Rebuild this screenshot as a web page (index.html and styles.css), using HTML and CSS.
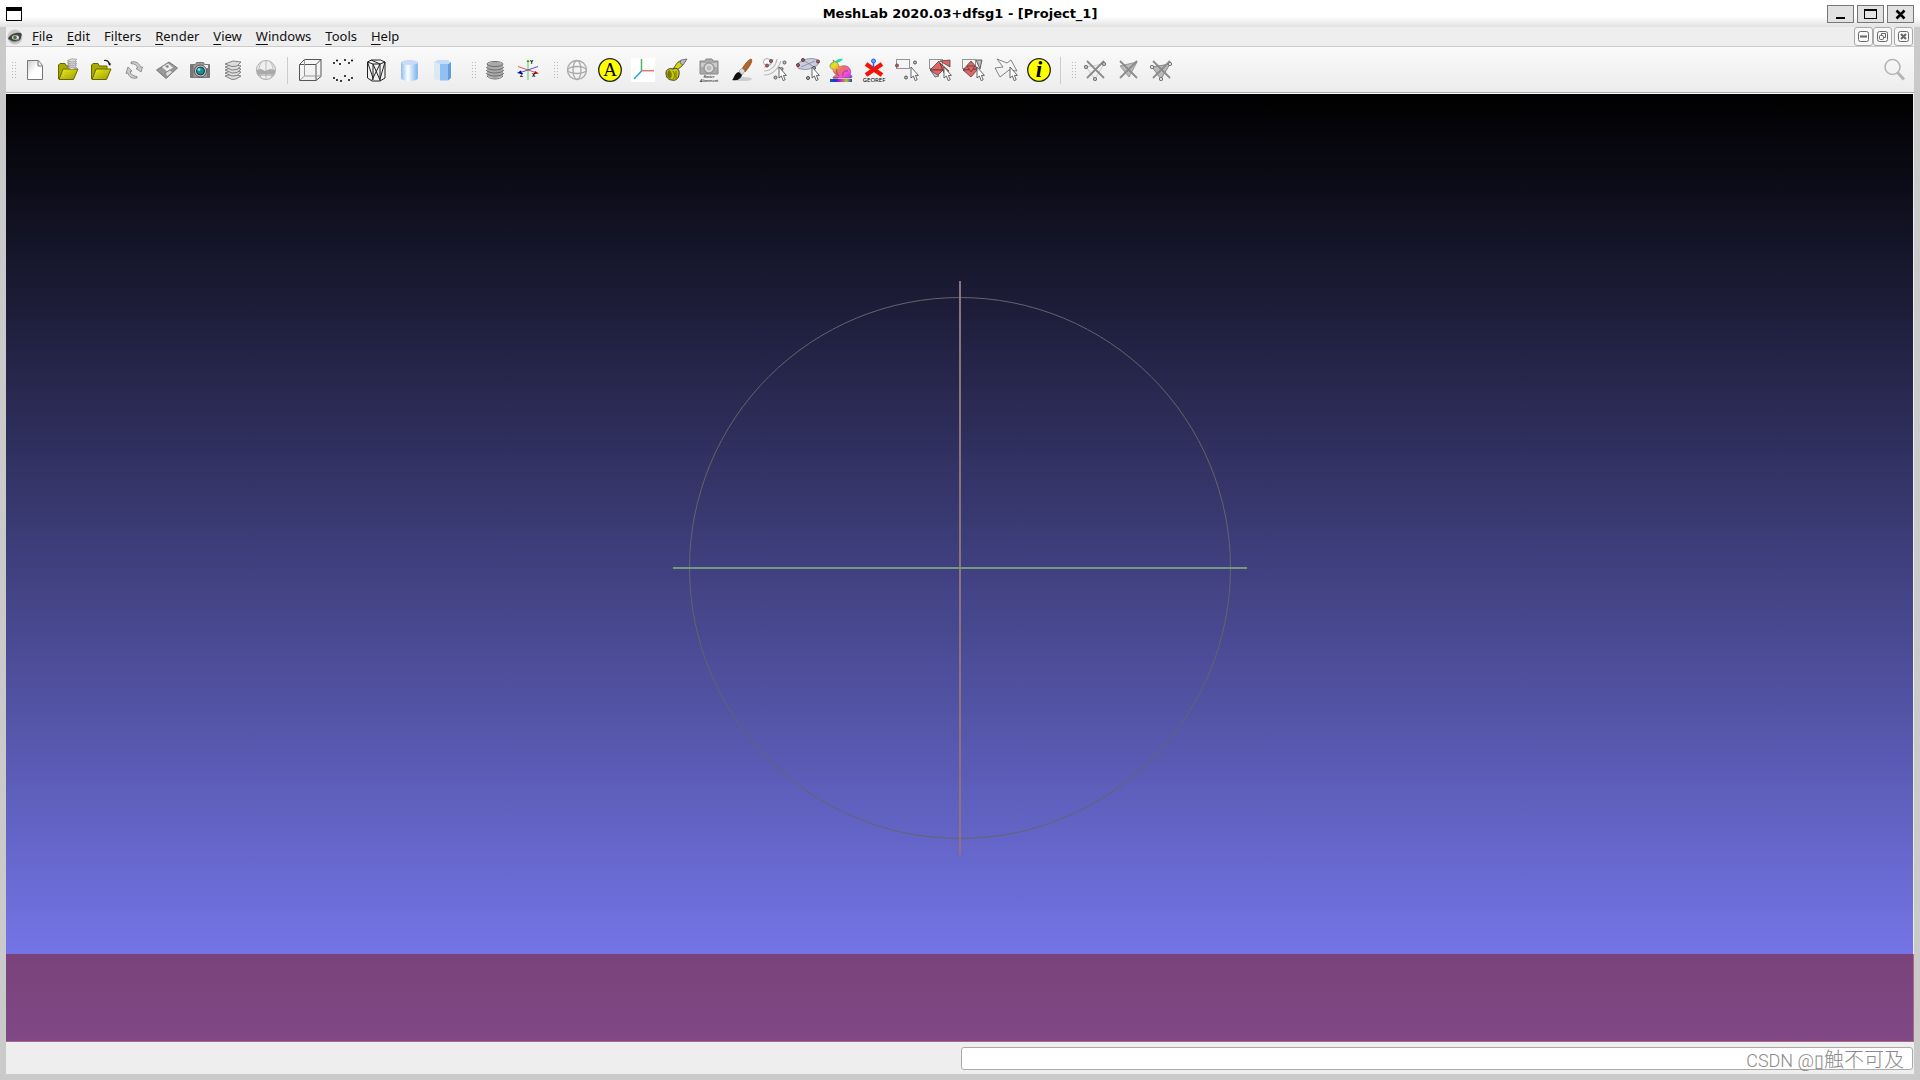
FILE: index.html
```
<!DOCTYPE html>
<html lang="en">
<head>
    <meta charset="UTF-8">
    <meta name="viewport" content="width=device-width, initial-scale=1.0">
    <title>MeshLab 2020.03+dfsg1 - [Project_1]</title>
    <link rel="stylesheet" href="styles.css">
</head>
<body>
    <!-- Shapes shared by several toolbar icons -->
    <svg class="defs" aria-hidden="true">
        <defs>
            <linearGradient id="paper" x1="0" y1="0" x2="1" y2="1">
                <stop offset="0" stop-color="#ccc"/><stop offset=".5" stop-color="#fff"/>
            </linearGradient>
            <linearGradient id="folder" x1="0" y1="0" x2="1" y2="1">
                <stop offset="0" stop-color="#f0f020"/><stop offset="1" stop-color="#999900"/>
            </linearGradient>
            <linearGradient id="smooth" x1="0" x2="1">
                <stop offset="0" stop-color="#8dbcf0"/><stop offset=".4" stop-color="#fff"/><stop offset=".9" stop-color="#8dbcf0"/>
            </linearGradient>
            <linearGradient id="rainbow" x1="0" x2="1">
                <stop offset="0" stop-color="#1060a0"/><stop offset=".25" stop-color="#2030e0"/><stop offset=".5" stop-color="#e020c0"/><stop offset=".75" stop-color="#a0d020"/><stop offset="1" stop-color="#2040c0"/>
            </linearGradient>
            <linearGradient id="bunny" x1="0" y1="0" x2="1" y2="1">
                <stop offset="0" stop-color="#60e040"/><stop offset=".25" stop-color="#f0e020"/><stop offset=".5" stop-color="#f07060"/><stop offset=".75" stop-color="#f050e0"/><stop offset="1" stop-color="#a030f0"/>
            </linearGradient>
            <symbol id="cursor" viewBox="0 0 24 24">
                <path d="M16 9v11l2.4-2 1.8 4.6 2-.9-1.8-4.3h3z" fill="#fff" stroke="#555" stroke-width=".9"/>
            </symbol>
            <symbol id="layers" viewBox="0 0 24 24">
                <g fill="#ddd" stroke="#777" stroke-width=".9">
                    <path d="M4 18l8-2 8 2-5 3-4 .5z"/><path d="M4 15l8-3 8 2-4 3.500-5 .5z"/><path d="M4 12l8-3 8 2-4 3.500-5 .5z"/><path d="M4 9l8-3 8 2-4 3.500-5 .5z"/><path d="M4 6l8-3 8 1-4 4-5 .5z"/>
                </g>
            </symbol>
            <symbol id="strike" viewBox="0 0 24 24">
                <path d="M4 3l17 17M21 3L4 20" stroke="#8b8b8b" stroke-width="1.800" fill="none"/>
            </symbol>
        </defs>
    </svg>

    <div class="window">
        <header class="titlebar">
            <svg class="window-icon" viewBox="0 0 16 14" shape-rendering="crispEdges"><path d="M0 0h16v14H0z"/><path d="M1 4h14v9H1z" fill="#fff"/></svg>
            <h1>MeshLab 2020.03+dfsg1 - [Project_1]</h1>
            <div class="window-buttons">
                <button aria-label="Minimize"><svg viewBox="0 0 25 16"><path d="M8 11h9v2H8z"/></svg></button>
                <button aria-label="Maximize"><svg viewBox="0 0 25 16" shape-rendering="crispEdges"><path d="M6 3h13v10H6zM7 5v7h11V5z" fill-rule="evenodd"/></svg></button>
                <button aria-label="Close"><svg viewBox="0 0 25 16"><path d="M8.500 4.500l8 8m0-8l-8 8" stroke="#000" stroke-width="2.500"/></svg></button>
            </div>
        </header>

        <div class="frame">
            <nav class="menubar">
                <svg class="app-icon" viewBox="0 0 16 16"><circle cx="8" cy="8" r="7.500" fill="#c8c8c8"/><path d="M1 10c1-4 7-7 13-6l1 2c-1 1-1 2-1 3-1 4-6 4-9 3z" fill="#444"/><ellipse cx="8.500" cy="8.500" rx="3.500" ry="2.200" fill="#ddd"/><circle cx="8" cy="8.500" r="1.800" fill="#357a35"/><path d="M3 11c3 3 7 2 9-1" fill="none" stroke="#888"/></svg>
                <button><u>F</u>ile</button>
                <button><u>E</u>dit</button>
                <button>Fi<u>l</u>ters</button>
                <button><u>R</u>ender</button>
                <button><u>V</u>iew</button>
                <button><u>W</u>indows</button>
                <button><u>T</u>ools</button>
                <button><u>H</u>elp</button>
                <div class="document-buttons">
                    <button aria-label="Minimize project"><svg viewBox="0 0 17 17"><rect x="3.500" y="3.500" width="10" height="10" rx="2"/><path d="M5 8.500h7" stroke-width="2"/></svg></button>
                    <button aria-label="Restore project"><svg viewBox="0 0 17 17"><rect x="3.500" y="3.500" width="10" height="10" rx="2"/><rect x="5.500" y="7.500" width="4" height="4" rx="1"/><path d="M7.500 7V5.500h4v4H10"/></svg></button>
                    <button class="document-close" aria-label="Close project"><svg viewBox="0 0 17 17"><rect x="3.500" y="3.500" width="10" height="10" rx="2"/><path d="M6 6l5 5m0-5l-5 5" stroke-width="2"/></svg></button>
                </div>
            </nav>

            <div class="toolbars">
                <div class="toolbar main-toolbar">
                    <span class="grip"></span>
                    <button aria-label="New project"><svg viewBox="0 0 24 24"><path d="M4.500 2.500h11l4 5v14h-15z" fill="url(#paper)" stroke="#777"/><path d="M15 3v5h4" fill="#eee" stroke="#777"/></svg></button>
                    <button aria-label="Open project"><svg viewBox="0 0 24 24"><path d="M2.500 21V7l1.500-1.500h5L10.500 8H18v5" fill="#a9a900" stroke="#666600"/><path d="M3 21.500L7 11h15l-4.500 10.500z" fill="url(#folder)" stroke="#666600"/><use href="#layers" x="8" y="-1" width="16" height="14"/></svg></button>
                    <button aria-label="Import mesh"><svg viewBox="0 0 24 24"><path d="M2.500 21V7l1.500-1.500h5L10.500 8H18v4" fill="#a9a900" stroke="#666600"/><path d="M3 21.500L7 11h15l-4.500 10.500z" fill="url(#folder)" stroke="#666600"/><path d="M15 2.500c3-.5 5 1 5.500 4" fill="none" stroke="#222" stroke-width="1.200"/><path d="M19 5.500l3 0-1 2.500z"/></svg></button>
                    <button aria-label="Reload"><svg viewBox="0 0 24 24"><g fill="#ccc" stroke="#888" stroke-width=".9"><path d="M9 4c5-1 8 1 9.500 5l2 0-1.500 5-5-3.500 2-.5c-1.500-3-3-4-7-4.500z"/><path d="M15 20c-5 1-8-1-9-5l-2 .5L6 9l4 4-2 .6c1 3 3 4.500 7 5z"/></g></svg></button>
                    <button aria-label="Export mesh"><svg viewBox="0 0 24 24"><path d="M1.500 12L14 4l8.500 6L11 20.500z" fill="#999" stroke="#777"/><path d="M7 9l6-3.500 5 4-6 4z" fill="#eee"/><path d="M10 15l5-3 3 2-6 5z" fill="#ddd" stroke="#777" stroke-width=".8"/><path d="M10 8l3-1 1 2-2 1z" fill="#888"/></svg></button>
                    <button aria-label="Snapshot"><svg viewBox="0 0 24 24"><path d="M2.500 6.500h5l1-2h7l1 2h5v13h-19z" fill="#999" stroke="#777"/><path d="M2.500 7h3v12h-3zM19 7h2v12h-2z" fill="#777"/><rect x="16" y="7" width="4" height="3" fill="#eee"/><circle cx="12.500" cy="13" r="6" fill="#ccc" stroke="#555"/><circle cx="12.500" cy="13" r="4" fill="#158e96" stroke="#234"/><circle cx="11" cy="11.500" r="1.500" fill="#80e0e0"/></svg></button>
                    <button aria-label="Show layer dialog"><svg viewBox="0 0 24 24"><use href="#layers" width="24" height="24"/></svg></button>
                    <button aria-label="Show raster mode"><svg viewBox="0 0 24 24"><circle cx="12" cy="12" r="9.500" fill="#eee" stroke="#aaa"/><path d="M12 2v20M8 3c-4 6-4 12 0 18M16 3c4 6 4 12 0 18" fill="none" stroke="#bbb"/><path d="M3 12l4-1 4 2 5-2 5 1v4l-18 0z" fill="#aaa"/><path d="M4 17h16" stroke="#999"/></svg></button>
                    <span class="separator"></span>
                    <button aria-label="Bounding box"><svg viewBox="0 0 24 24"><path d="M1.500 6.500H18v16H1.500zM1.500 6.500l5-5h16.500v17l-5 4M18 6.500l5-5" fill="none" stroke="#555"/><path d="M6.500 1.500v16.500H23M6.500 18l-5 4.500" fill="none" stroke="#999"/></svg></button>
                    <button aria-label="Points"><svg viewBox="0 0 24 24"><path d="M3 5h0M6 2.500h0M9 6h0M14 2h0M18 5h0M21 2.500h0M3 20h0M6 22h0M10 23h0M14 18h0M18 22h0M21 20h0" stroke="#000" stroke-width="2" stroke-linecap="round"/></svg></button>
                    <button aria-label="Wireframe"><svg viewBox="0 0 24 24"><path d="M3.500 4l4-2h9l4.500 2v16l-5 3H8l-4.500-3zM3.500 4L9 6h7l5-2M9 6v16M16 6v17M9 6l7 16M16 6L8 22M3.500 4L9 20M21 4l-5 17M7 2l9 4" fill="none" stroke="#222"/></svg></button>
                    <button aria-label="Smooth shading"><svg viewBox="0 0 24 24"><path d="M4 4v16c0 4 17 4 17 0V4z" fill="url(#smooth)"/><ellipse cx="12.500" cy="4.500" rx="8.500" ry="2.500" fill="#c4dcf5"/></svg></button>
                    <button aria-label="Flat shading"><svg viewBox="0 0 24 24"><path d="M4 4l6 2v16.500L4 21z" fill="#dce8f4"/><path d="M10 6h8v16.500h-8z" fill="#91c1f3"/><path d="M18 6l3-2v16l-3 2.500z" fill="#659cda"/><path d="M4 4l4-2h9l4 2-3 2h-8z" fill="#c4dcf5"/></svg></button>
                </div>

                <div class="toolbar">
                    <span class="grip"></span>
                    <button aria-label="Rasters"><svg viewBox="0 0 24 24"><path d="M4 6l8-3 8 3v12l-8 3-8-3z" fill="#aaa"/><g fill="none" stroke="#666" stroke-width=".9"><ellipse cx="12" cy="6" rx="8" ry="2.500"/><path d="M3 9c3 4 15 4 18 0M3 12c3 4 15 4 18 0M3 15c3 4 15 4 18 0M4 18c3 4 13 4 16 0"/></g></svg></button>
                    <button aria-label="Axis"><svg viewBox="0 0 24 24"><path d="M12 4v18" stroke="#9adf9a" stroke-width="1.800"/><path d="M2 8.500l19 6.500" stroke="#d55"/><path d="M22 8.500L3 15" stroke="#55c"/><path d="M10.500 4l1.500-2.500 1.500 2.500z" fill="#0a0"/><path d="M19 13l4 2.500-5 .5z" fill="#c00"/><path d="M5 12.500L1 15l5 1z" fill="#00c"/><text x="14" y="6" class="axis-label">Y</text><text x="4" y="19" class="axis-label">Z</text><text x="16" y="19" class="axis-label">X</text></svg></button>
                </div>

                <div class="toolbar edit-toolbar">
                    <span class="grip"></span>
                    <button aria-label="Trackball"><svg viewBox="0 0 24 24"><g fill="none" stroke="#aaa" stroke-width="1.300"><circle cx="12" cy="12" r="9.500"/><ellipse cx="12" cy="12" rx="4" ry="9.500"/><ellipse cx="12" cy="12" rx="9.500" ry="3.500"/></g></svg></button>
                    <button aria-label="Annotate"><svg viewBox="0 0 24 24"><circle cx="12" cy="12" r="11.300" fill="#ff0" stroke="#222" stroke-width="1.300"/><text x="12" y="18" class="letter-a">A</text></svg></button>
                    <button aria-label="Manipulators"><svg viewBox="0 0 24 24"><path d="M0 0h24v24H0z" fill="#fff"/><path d="M10.500 1v12" stroke="#4db35f" stroke-width="1.500"/><path d="M10.500 12.700H23" stroke="#ef7070" stroke-width="1.500"/><path d="M10.500 13L3 21" stroke="#20a0e0" stroke-width="1.500"/></svg></button>
                    <button aria-label="Measuring tool"><svg viewBox="0 0 24 24"><path d="M9 11c3-4 4-7 7-8l6-1-4 6-5 4z" fill="#d6d600" stroke="#444" stroke-width=".9"/><path d="M17 2l6-1-4 6-3-2z" fill="#bbb" stroke="#666" stroke-width=".8"/><path d="M2 15c0-4 4-5 7-4 4-2 7 1 6 5 0 5-4 7-7 6-4 0-6-3-6-7z" fill="#c8c800" stroke="#333"/><path d="M5 12c-3 3-2 7 1 9 3-3 2-7-1-9z" fill="#777700"/><path d="M9 13c2 3 2 6 0 8M12 13v8" fill="none" stroke="#666600" stroke-width=".9"/></svg></button>
                    <button aria-label="Raster alignment"><svg viewBox="0 0 24 24"><path d="M3 3h5l1-2h6l1 2h5v13H3z" fill="#aaa" stroke="#888"/><path d="M4 5h16v4H4z" fill="#ccc"/><circle cx="12" cy="10" r="5" fill="#ddd" stroke="#999" stroke-width="1.500"/><circle cx="12" cy="10" r="2.500" fill="#bbb"/><text x="12" y="19.500" class="tiny">Raster</text><text x="12" y="24" class="tiny">Alignment</text></svg></button>
                    <button aria-label="Z-painting"><svg viewBox="0 0 24 24"><ellipse cx="13" cy="21" rx="9" ry="2" fill="#ccc"/><path d="M12 11c3-5 6-9 9-10 2 1 0 6-6 13z" fill="#b76322" stroke="#70401c" stroke-width=".7"/><path d="M9 13l3-3 3 3-3 4z" fill="#ddd" stroke="#888" stroke-width=".6"/><path d="M2 22c2-1 2-7 7-8l3 3c-1 4-5 6-10 5z" fill="#111"/></svg></button>
                    <button aria-label="Point picking"><svg viewBox="0 0 24 24"><g fill="none" stroke="#bbb" stroke-width="1.200"><path d="M1 9c5 0 8-3 9-8M1 13c7 0 12-5 13-12M1 17c9 0 15-7 17-14"/></g><circle cx="4" cy="4" r="3.500" fill="#fff" stroke="#aaa"/><g stroke="#555"><circle cx="4" cy="7.500" r="1.500" fill="#e44"/><circle cx="8" cy="3" r="1.500" fill="#e44"/><circle cx="21.500" cy="4.500" r="1.500" fill="#bbb"/><circle cx="18.500" cy="11" r="1.500" fill="#bbb"/><circle cx="12.500" cy="19.500" r="1.500" fill="#bbb"/></g><use href="#cursor" width="24" height="24"/></svg></button>
                    <button aria-label="Select vertex clusters"><svg viewBox="0 0 24 24"><ellipse cx="12" cy="6" rx="11" ry="5" transform="rotate(-12 12 6)" fill="#c9cbe0" stroke="#99a"/><path d="M5 9L19 3M7 2l11 7" stroke="#888" stroke-width=".8"/><g stroke="#444"><circle cx="2" cy="7" r="1.500" fill="#e44"/><circle cx="7" cy="2" r="1.500" fill="#e44"/><circle cx="22" cy="3.500" r="1.500" fill="#e44"/><circle cx="18" cy="10" r="1.500" fill="#bbb"/><circle cx="12" cy="20" r="1.500" fill="#bbb"/></g><use href="#cursor" width="24" height="24"/></svg></button>
                    <button aria-label="Quality mapper"><svg viewBox="0 0 24 24"><path d="M6 4c2-3 5-4 8-3-1 2-4 3-6 4z" fill="#20e0a0"/><path d="M1 8c0-2 2-4 4-4l-1-2 3 2c2 1 3 3 3 5 4-2 9-2 11 2 1 2 1 4 0 6 2 0 3 2 1 3H4c0-2 2-2 4-3-3-1-4-4-4-6-2 0-3-1-3-3z" fill="url(#bunny)" stroke="#855" stroke-width=".6"/><path d="M14 18c-1-3 1-6 5-5M8 11c-1 3 0 5 2 7M4 20h5" stroke="#704070" fill="none" stroke-width=".8"/><path d="M1 21h22v3H1z" fill="url(#rainbow)"/></svg></button>
                    <button aria-label="Georeferencing"><svg viewBox="0 0 24 24"><path d="M4 6l16 11M20 6L4 17" stroke="#f31309" stroke-width="4.500"/><path d="M11.500 3v7" stroke="#2360ff" stroke-width="1.500"/><circle cx="11.500" cy="3" r="2" fill="#79f" stroke="#2360ff"/><text x="12" y="23.500" class="georef">GEOREF</text></svg></button>
                    <button aria-label="Select vertices"><svg viewBox="0 0 24 24"><path d="M1.500 1.500h13v9h-13z" fill="none" stroke="#333" stroke-dasharray="1 1"/><g stroke="#555"><circle cx="2" cy="7.500" r="1.500" fill="#e44"/><circle cx="20" cy="4.500" r="1.500" fill="#bbb"/><circle cx="11" cy="19.500" r="1.500" fill="#bbb"/></g><use href="#cursor" width="24" height="24"/></svg></button>
                    <button aria-label="Select faces"><svg viewBox="0 0 24 24"><path d="M1.500 1.500h13v9h-13z" fill="none" stroke="#333" stroke-dasharray="1 1"/><g fill="#e86262" stroke="#444" stroke-width=".8"><path d="M2 12l9-9 4 9z"/><path d="M2 12h13l-6 6z"/><path d="M12 3l10-1v7z"/><path d="M12 5l9 8-5 2z"/></g><path d="M3 13l8 5-4 1z" fill="#ccc" stroke="#555" stroke-width=".8"/><use href="#cursor" width="24" height="24"/></svg></button>
                    <button aria-label="Select connected faces"><svg viewBox="0 0 24 24"><path d="M1.500 1.500h13v9h-13z" fill="none" stroke="#333" stroke-dasharray="1 1"/><path d="M15 2h6l-2 9z" fill="#bbb" stroke="#555" stroke-width=".9"/><g fill="#e86262" stroke="#444" stroke-width=".8"><path d="M2 12l8-9 7 8z"/><path d="M2 12l15-1-7 8z"/><path d="M6 8l8 0-4 6z"/></g><use href="#cursor" width="24" height="24"/></svg></button>
                    <button aria-label="Select by polyline"><svg viewBox="0 0 24 24"><path d="M3 1l10 4 4-3 6 11-8-1-9 7L1 10l8-1z" fill="none" stroke="#777" stroke-width=".9"/><use href="#cursor" width="24" height="24"/></svg></button>
                    <button aria-label="Information"><svg viewBox="0 0 24 24"><circle cx="12" cy="12" r="11.300" fill="#ff0" stroke="#222" stroke-width="1.300"/><text x="12" y="19" class="letter-i">i</text></svg></button>
                    <span class="separator"></span>
                </div>

                <div class="toolbar">
                    <span class="grip"></span>
                    <button aria-label="Delete vertices"><svg viewBox="0 0 24 24"><path d="M3 9l18-3-9 15z" fill="none" stroke="#ccc"/><use href="#strike" width="24" height="24"/><g fill="#bbb" stroke="#777"><circle cx="3" cy="9" r="1.700"/><circle cx="21" cy="6" r="1.700"/><circle cx="12" cy="21" r="1.700"/></g></svg></button>
                    <button aria-label="Delete faces"><svg viewBox="0 0 24 24"><path d="M4 8l17-4-8 15z" fill="#bbb" stroke="#999"/><use href="#strike" width="24" height="24"/></svg></button>
                    <button aria-label="Delete faces and vertices"><svg viewBox="0 0 24 24"><path d="M3 9l18-3-9 15z" fill="#bbb" stroke="#888"/><use href="#strike" width="24" height="24"/><g fill="#ddd" stroke="#777"><circle cx="3" cy="9" r="1.700"/><circle cx="21" cy="6" r="1.700"/><circle cx="12" cy="21" r="1.700"/></g></svg></button>
                </div>

                <button class="search" aria-label="Search"><svg viewBox="0 0 24 24"><circle cx="10.500" cy="9" r="7.500" fill="none" stroke="#b5b5b5" stroke-width="1.600"/><path d="M15.500 14.500l6.500 7" stroke="#b5b5b5" stroke-width="3"/></svg></button>
            </div>

            <main class="viewport">
                <!-- Trackball -->
                <svg class="trackball" viewBox="0 0 576 576">
                    <circle cx="288" cy="288" r="270.500" fill="none" stroke="#64646a"/>
                    <path d="M288 1v574" stroke="#8c747f" stroke-width="2"/>
                    <path d="M1 288h574" stroke="#749780" stroke-width="2"/>
                </svg>
                <div class="log"></div>
            </main>

            <footer class="statusbar">
                <input type="text" aria-label="Progress" readonly>
                <span class="watermark"><span class="site">CSDN @▯</span>触不可及</span>
            </footer>
        </div>
    </div>
</body>
</html>
```
FILE: styles.css
```
* {
    box-sizing: border-box;
}

body {
    margin: 0;
    background-color: #cacaca;
    font-family: "Noto Sans", sans-serif;
    font-size: 13px;
    color: #111;
}

button {
    margin: 0;
    padding: 0;
    border: none;
    background: none;
    font: inherit;
    color: inherit;
}

svg {
    display: block;
}

.defs {
    position: absolute;
    width: 0;
    height: 0;
}

.window {
    display: flex;
    flex-direction: column;
    height: 100vh;
}

/* Title bar */
.titlebar {
    display: grid;
    grid-template-columns: 1fr auto 1fr;
    align-items: center;
    height: 27px;
    padding: 0 6px;
    background: linear-gradient(#fff 60%, #e2e2e2);
}

.titlebar h1 {
    margin: 0;
    font-family: "DejaVu Sans", sans-serif;
    font-size: 13px;
    font-weight: bold;
    color: #000;
}

.window-icon {
    width: 16px;
    height: 14px;
}

.window-buttons {
    display: flex;
    justify-content: flex-end;
    gap: 3px;
}

.window-buttons button {
    width: 27px;
    height: 18px;
    border: 1px solid #777;
    background-color: #e2e2e2;
}

.frame {
    flex: 1;
    display: flex;
    flex-direction: column;
    margin: 0 6px 6px;
    background-color: #eee;
}

/* Menu bar */
.menubar {
    display: flex;
    align-items: center;
    height: 20px;
    border-bottom: 1px solid #ccc;
}

.app-icon {
    width: 16px;
    height: 16px;
    margin: 0 2px 0 1px;
}

.menubar > button {
    padding: 0 7px 1px;
    line-height: 18px;
}

.menubar u {
    text-underline-offset: 3px;
}

.document-buttons {
    display: flex;
    margin-left: auto;
    padding-right: 1px;
}

.document-buttons button {
    width: 19px;
    height: 19px;
    border: 1px solid #aaa;
    border-radius: 3px;
    background-color: #f8f8f8;
}

.document-buttons .document-close {
    margin-left: 2px;
}

.document-buttons svg {
    fill: none;
    stroke: #666;
}

/* Toolbars */
.toolbars {
    display: flex;
    align-items: center;
    height: 47px;
    border-bottom: 1px solid #fff;
    box-shadow: inset 0 -1px #aaa;
    background: linear-gradient(#fafafa, #ececec);
}

.toolbar {
    display: flex;
    align-items: center;
    margin-right: 4px;
}

.main-toolbar {
    padding-right: 4px;
}

.edit-toolbar {
    margin-right: 0;
}

.toolbar button {
    width: 33px;
    height: 32px;
}

.toolbars svg {
    width: 24px;
    height: 24px;
    margin: 0 auto;
}

.grip {
    width: 6px;
    height: 18px;
    margin: 0 1px 0 5px;
    background: radial-gradient(circle, #bbb 30%, transparent 40%) 0 0 / 3px 3px;
}

.separator {
    width: 1px;
    height: 27px;
    margin: 0 5px;
    background-color: #ccc;
}

.search {
    width: 33px;
    margin-left: auto;
    margin-right: 4px;
}

.axis-label {
    font-size: 5px;
    font-weight: bold;
}

.letter-a {
    font-family: "Liberation Serif", serif;
    font-size: 19px;
    text-anchor: middle;
}

.letter-i {
    font-family: "Liberation Serif", serif;
    font-size: 23px;
    font-style: italic;
    font-weight: bold;
    text-anchor: middle;
}

.tiny {
    font-size: 4px;
    font-style: italic;
    text-anchor: middle;
}

.georef {
    font-size: 6px;
    text-anchor: middle;
}

/* 3D view */
.viewport {
    position: relative;
    flex: 1;
    display: flex;
    align-items: center;
    justify-content: center;
    margin-right: 1px;
    background: linear-gradient(#000, #8080ff);
}

.trackball {
    width: 576px;
    height: 576px;
}

/* Log panel laid over the bottom of the view */
.log {
    position: absolute;
    left: 0;
    right: -1px;
    bottom: 0;
    height: 88px;
    border-right: 1px solid #a86a86;
    border-bottom: 1px solid #a86a86;
    background-color: rgba(128, 18, 13, 0.5);
}

/* Status bar */
.statusbar {
    position: relative;
    display: flex;
    justify-content: flex-end;
    height: 32px;
    padding: 5px 1px;
}

.statusbar input {
    width: calc(50% - 1px);
    height: 23px;
    border: 1px solid #aaa;
    border-radius: 3px;
    background-color: #fff;
}

.watermark {
    position: absolute;
    right: 10px;
    bottom: 0;
    font-family: Roboto, "Noto Sans CJK SC", sans-serif;
    font-size: 20px;
    font-weight: 300;
    line-height: 26px;
    color: #8a8a8a;
}

.watermark .site {
    font-size: 18px;
}
```
